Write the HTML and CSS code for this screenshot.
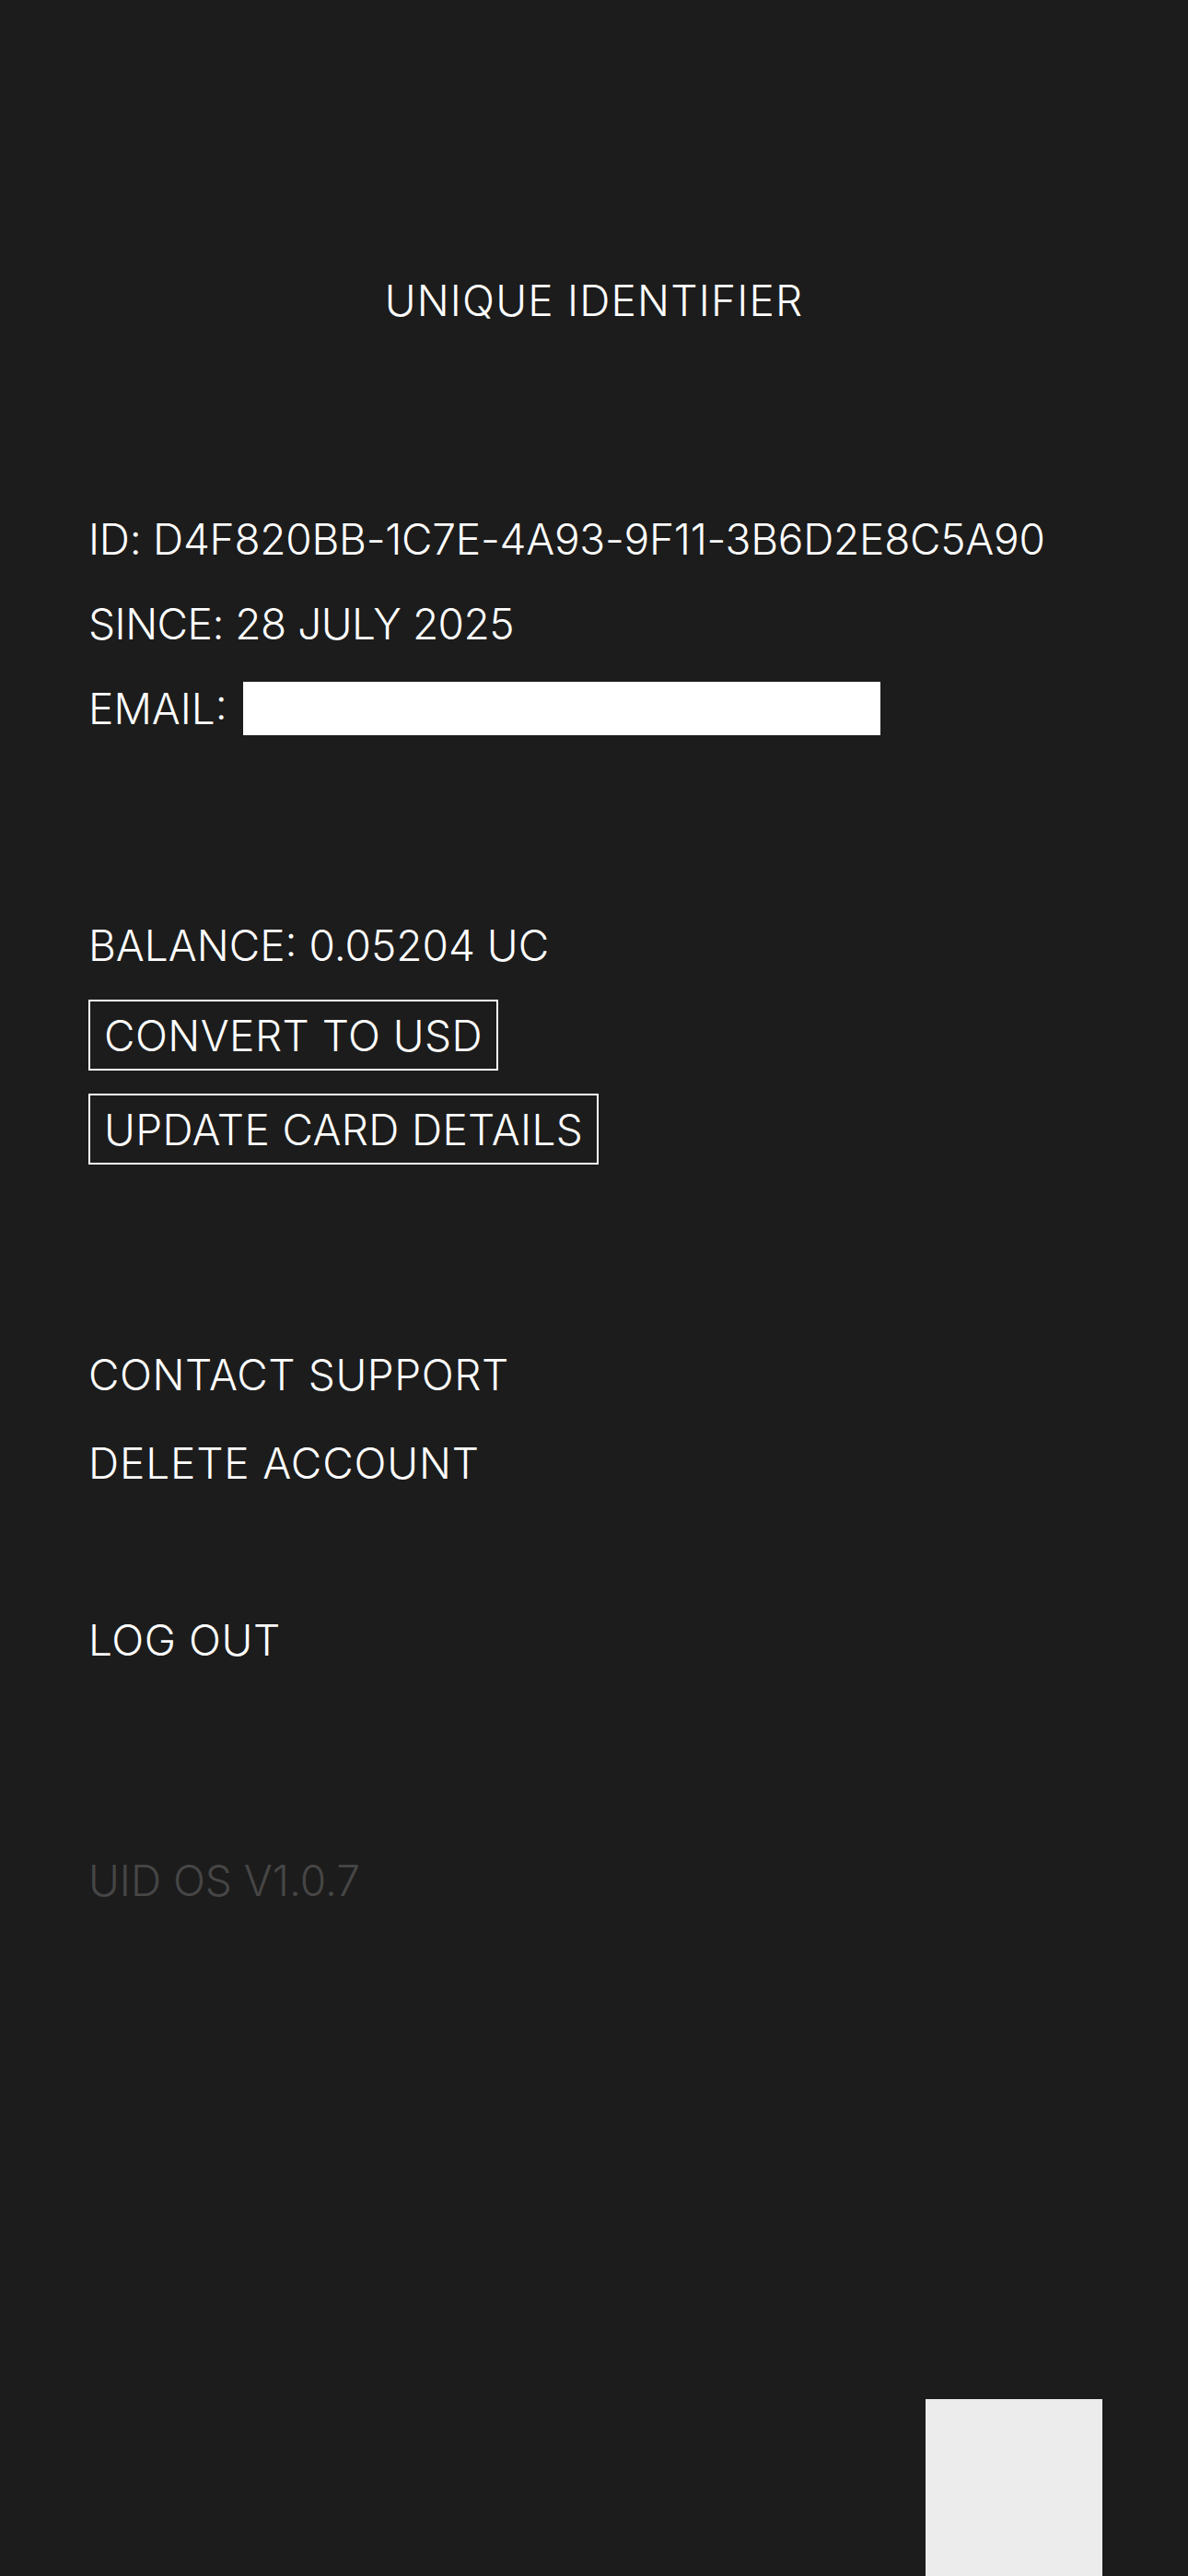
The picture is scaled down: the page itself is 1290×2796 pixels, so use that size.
FILE: index.html
```html
<!DOCTYPE html>
<html lang="en">
<head>
<meta charset="utf-8">
<title>Unique Identifier</title>
<link rel="stylesheet" href="styles.css">
</head>
<body>
<main class="page">
  <h1 class="title">UNIQUE IDENTIFIER</h1>

  <section class="info">
    <p class="line line-id">ID: D4F820BB-1C7E-4A93-9F11-3B6D2E8C5A90</p>
    <p class="line line-since">SINCE: 28 JULY 2025</p>
    <p class="line email-row">EMAIL: <span class="redacted"></span></p>
  </section>

  <section class="wallet">
    <p class="line">BALANCE: 0.05204 UC</p>
    <button class="btn btn-first">CONVERT TO USD</button>
    <button class="btn btn-second">UPDATE CARD DETAILS</button>
  </section>

  <section class="account">
    <a class="line link link-contact">CONTACT SUPPORT</a>
    <a class="line link link-delete">DELETE ACCOUNT</a>
    <a class="line link link-logout">LOG OUT</a>
  </section>

  <p class="line version">UID OS V1.0.7</p>
</main>
<div class="corner-tile"></div>
</body>
</html>
```

FILE: styles.css
```css
html, body {
  margin: 0;
  padding: 0;
}

body {
  background: #1c1c1c;
  color: #ffffff;
  font-family: "Inter", "Liberation Sans", sans-serif;
  font-weight: 300;
  font-size: 46px;
  line-height: 56px;
  height: 2796px;
  overflow: hidden;
  position: relative;
}

.page {
  display: flex;
  flex-direction: column;
  align-items: flex-start;
  padding: 298px 96px 0 96px;
}

.title {
  align-self: stretch;
  margin: 0;
  text-align: center;
  font-size: 46px;
  font-weight: 300;
  line-height: 56px;
  letter-spacing: 1.2px;
}

.line {
  margin: 0;
  height: 56px;
  white-space: nowrap;
}

.info {
  margin-top: 203px;
  display: flex;
  flex-direction: column;
  gap: 36px;
}

.line-id {
  letter-spacing: -0.25px;
}

.line-since {
  letter-spacing: -0.5px;
}

.email-row {
  display: flex;
  align-items: center;
  gap: 17px;
}

.redacted {
  display: inline-block;
  width: 692px;
  height: 58px;
  background: #ffffff;
}

.wallet {
  margin-top: 201px;
  display: flex;
  flex-direction: column;
  align-items: flex-start;
}

.btn {
  font: inherit;
  color: #ffffff;
  background: transparent;
  border: 2px solid #ffffff;
  padding: 9px 15px 8px 15px;
  margin: 25px 0 0 0;
  line-height: 56px;
  height: 77px;
  white-space: nowrap;
  cursor: pointer;
}

.btn-first {
  margin-top: 31px;
  letter-spacing: 0.45px;
}

.btn-second {
  letter-spacing: 0.33px;
}

.account {
  margin-top: 200px;
  display: flex;
  flex-direction: column;
}

.link {
  color: #ffffff;
  text-decoration: none;
  display: block;
}

.link-contact {
  letter-spacing: 0.6px;
}

.link-delete {
  margin-top: 40px;
  letter-spacing: 0.85px;
}

.link-logout {
  margin-top: 136px;
  letter-spacing: 0.6px;
}

.version {
  margin-top: 205px;
  color: #464646;
}

.corner-tile {
  position: absolute;
  right: 93px;
  bottom: 0;
  width: 192px;
  height: 192px;
  background: #ececec;
}
```
